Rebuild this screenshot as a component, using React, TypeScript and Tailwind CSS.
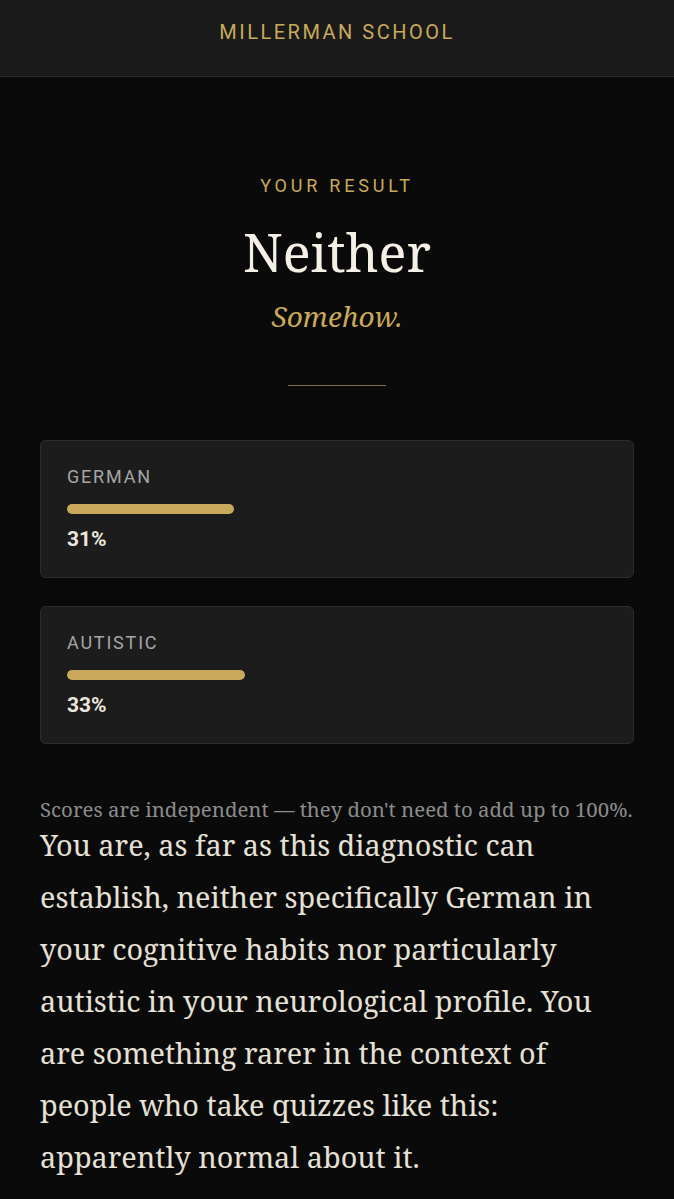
const scores = [
  { label: 'German', value: 31 },
  { label: 'Autistic', value: 33 },
];

const serif = 'font-["Noto_Serif","DejaVu_Serif",serif]';

const ScoreCard = ({ label, value }: { label: string; value: number }) => (
  <div className="rounded-md border border-[#2c2c2c] bg-[#1c1c1c] px-[26px] pt-[24px] pb-[24px]">
    <div className="text-[18px] leading-[24px] uppercase tracking-[0.1em] text-[#a6a6a6]">{label}</div>
    <div className="mt-[15px] h-[10px] w-full rounded-full bg-[#1c1c1c]">
      <div className="h-full rounded-full bg-[#c9a95b]" style={{ width: `${value}%` }} />
    </div>
    <div className="mt-[11px] text-[21px] leading-[28px] font-bold text-[#ece7dd]">{value}%</div>
  </div>
);

export default function App() {
  return (
    <div className="min-h-screen bg-[#0a0a0a] font-['Roboto',sans-serif]">
      <header className="flex h-[77px] justify-center border-b border-[#2e2e2e] bg-[#1a1a1a] pt-[20px]">
        <span className="text-[20px] leading-[24px] tracking-[0.125em] text-[#c9a95b]">MILLERMAN SCHOOL</span>
      </header>

      <main className="px-[40px] pt-[97px] pb-[24px]">
        <div className="flex flex-col items-center">
          <div className="text-[18px] leading-[24px] tracking-[0.21em] text-[#c9a95b]">YOUR RESULT</div>
          <h1 className={`${serif} mt-[22px] text-[52px] leading-[64px] text-[#f5f0e6]`}>Neither</h1>
          <p className={`${serif} mt-[14px] text-[28px] leading-[36px] italic text-[#c9a95b]`}>Somehow.</p>
          <div className="mt-[51px] h-px w-[98px] bg-[#7d6b42]" />
        </div>

        <div className="mt-[54px] flex flex-col gap-[28px]">
          {scores.map((s) => (
            <ScoreCard key={s.label} label={s.label} value={s.value} />
          ))}
        </div>

        <p className={`${serif} mt-[55px] text-[20.4px] leading-[20px] text-[#8c8c8c]`}>
          Scores are independent — they don't need to add up to 100%.
        </p>
        <p className={`${serif} text-[28.8px] leading-[52px] text-[#e6e1d6]`}>
          You are, as far as this diagnostic can establish, neither specifically German in your cognitive habits
          nor particularly autistic in your neurological profile. You are something rarer in the context of people
          who take quizzes like this: apparently normal about it.
        </p>
      </main>
    </div>
  );
}
